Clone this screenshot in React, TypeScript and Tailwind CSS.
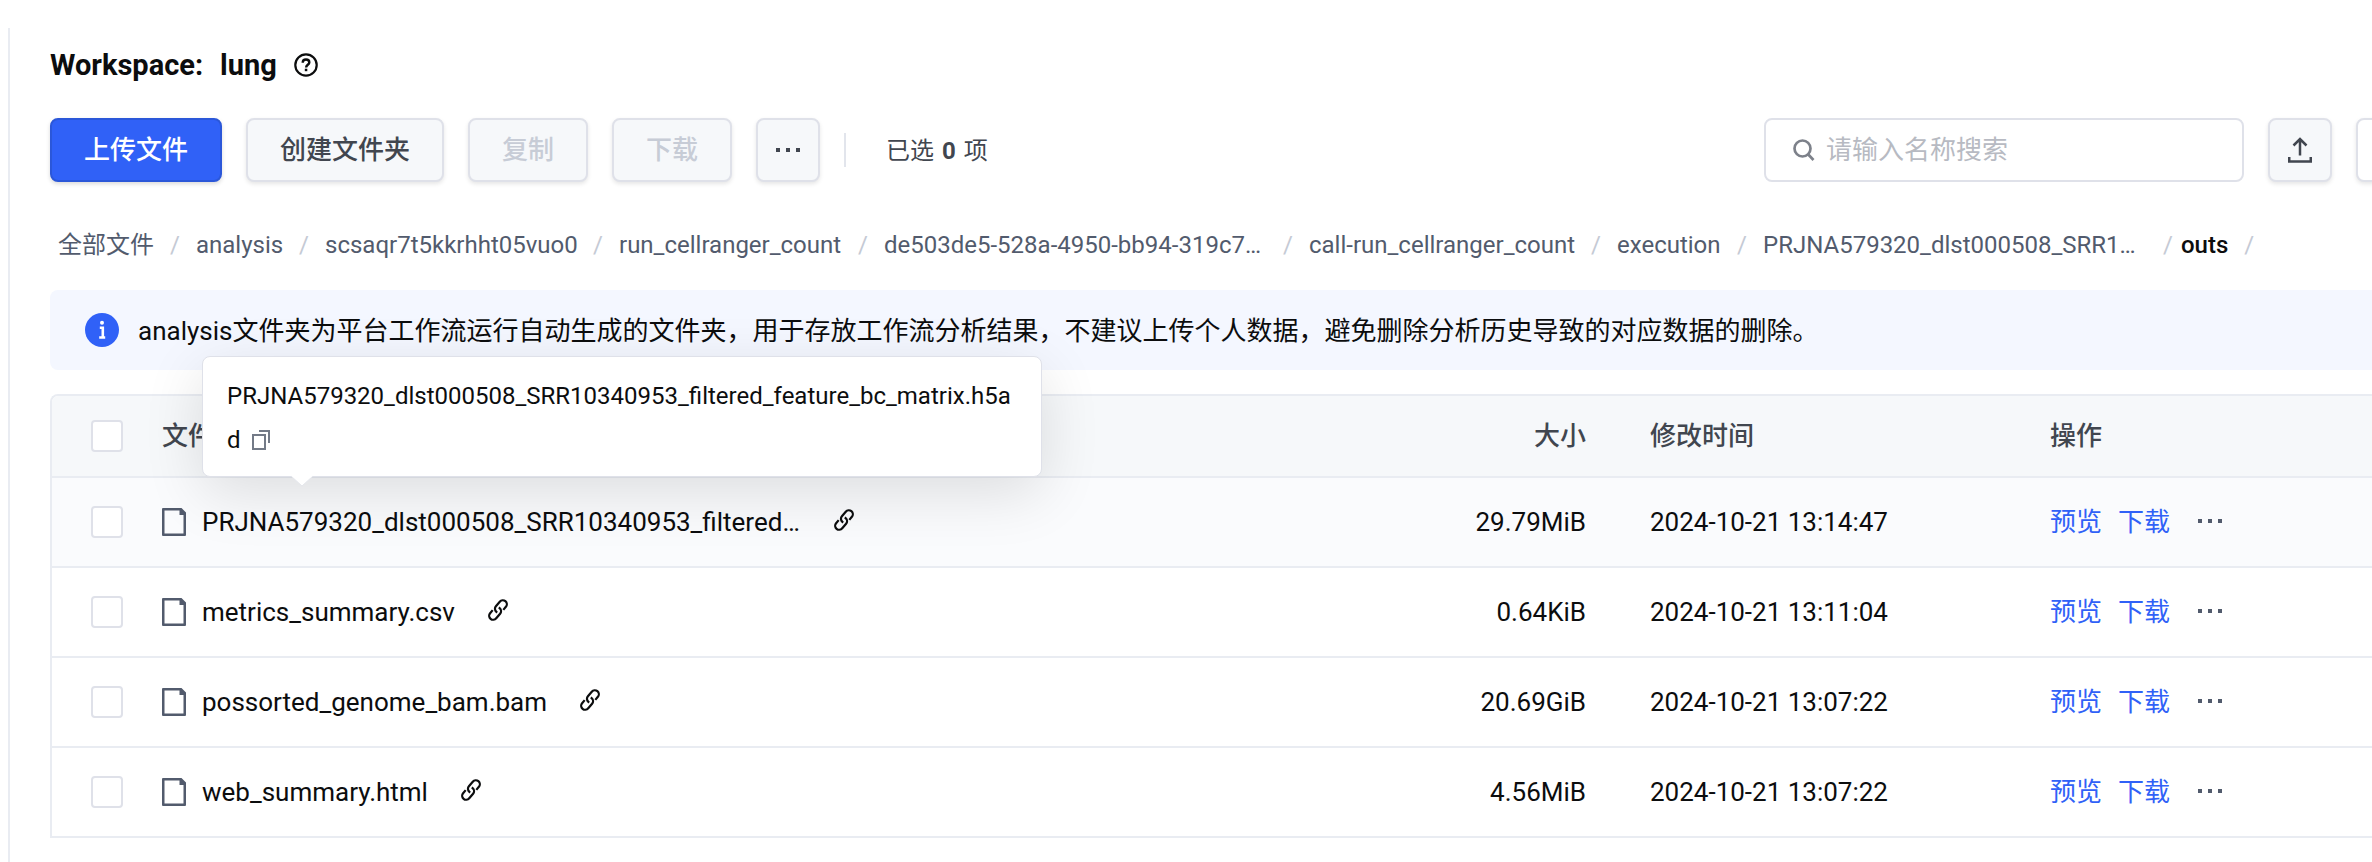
import type { ReactNode } from "react";

const crumbs = [
  { label: "全部文件", width: "w-[138px]", gap: "mr-4" },
  { label: "analysis", width: "w-[129px]", gap: "mr-4" },
  { label: "scsaqr7t5kkrhht05vuo0", width: "w-[294px]", gap: "mr-4" },
  { label: "run_cellranger_count", width: "w-[265px]", gap: "mr-4" },
  { label: "de503de5-528a-4950-bb94-319c7…", width: "w-[425px]", gap: "mr-4" },
  { label: "call-run_cellranger_count", width: "w-[308px]", gap: "mr-4" },
  { label: "execution", width: "w-[146px]", gap: "mr-4" },
  { label: "PRJNA579320_dlst000508_SRR1…", width: "w-[418px]", gap: "mr-2" },
];

const files = [
  { name: "PRJNA579320_dlst000508_SRR10340953_filtered…", nameWidth: "w-[597px]", size: "29.79MiB", time: "2024-10-21 13:14:47", active: true },
  { name: "metrics_summary.csv", nameWidth: "w-[251px]", size: "0.64KiB", time: "2024-10-21 13:11:04" },
  { name: "possorted_genome_bam.bam", nameWidth: "w-[343px]", size: "20.69GiB", time: "2024-10-21 13:07:22" },
  { name: "web_summary.html", nameWidth: "w-[224px]", size: "4.56MiB", time: "2024-10-21 13:07:22" },
];

const buttonBase = "flex h-16 shrink-0 items-center justify-center rounded-lg border-2 border-[#dfe1e9] text-[26px] font-medium shadow-[0_2px_4px_rgba(0,0,0,0.1)]";

function Dots({ className }: { className: string }) {
  return (
    <svg className={className} width="24" height="4" viewBox="0 0 24 4" fill="currentColor">
      <path d="M0 0h4v4H0zM10 0h4v4h-4zM20 0h4v4h-4z" />
    </svg>
  );
}

function HelpIcon() {
  return (
    <svg className="ml-[17px] shrink-0" width="24" height="24" viewBox="0 0 24 24" fill="none" stroke="#0c0d0e" strokeWidth="2.2">
      <circle cx="12" cy="12" r="10.7" />
      <path d="M8.700 9.700c0-2 1.400-3.200 3.300-3.200s3.300 1.200 3.300 2.900c0 2.300-3.200 2.400-3.200 5" strokeWidth="2.400" />
      <path d="M10.800 15.700h2.500v2.500h-2.500z" fill="#0c0d0e" stroke="none" />
    </svg>
  );
}

function FileIcon() {
  return (
    <svg className="shrink-0" width="24" height="28" viewBox="0 0 24 28">
      <path d="M0 1a1 1 0 0 1 1-1h18.500L24 4.500V27a1 1 0 0 1-1 1H1a1 1 0 0 1-1-1zM2.500 2.500v23h19V7H17.500V2.500z" fill="#525b6d" />
    </svg>
  );
}

function LinkIcon() {
  return (
    <svg className="-mt-1 shrink-0" width="22" height="22" viewBox="0 0 22 22" fill="none" stroke="#0c0d0e" strokeWidth="2.200">
      <g transform="translate(11 11) rotate(-50)">
        <path d="M3.500 4H7.500A4 4 0 0 0 7.500-4H1.500A4 4 0 0 0-2.500 0V1" />
        <path d="M-3.500-4H-7.500A4 4 0 0 0-7.500 4H-1.500A4 4 0 0 0 2.500 0V-1" />
      </g>
    </svg>
  );
}

function Checkbox() {
  return <span className="block size-8 shrink-0 rounded-[4px] border-2 border-[#dfe1e9] bg-white" />;
}

function Slash({ className = "" }: { className?: string }) {
  return <span className={`text-[#c5cad5] ${className}`}>/</span>;
}

function Row({ children, className }: { children: ReactNode; className: string }) {
  return <div className={`flex items-center border-b-2 border-[#e9ecf2] pl-[39px] ${className}`}>{children}</div>;
}

export default function App() {
  return (
    <div className="h-[862px] w-[2372px] overflow-hidden bg-white pt-7 pl-2 font-[Roboto,'Noto_Sans_CJK_SC',sans-serif] text-[#0c0d0e]">
      <main className="h-full border-l-2 border-[#e9ecf2] pl-10">
        <h1 className="flex h-[74px] items-center text-[29px] font-bold whitespace-pre">
          <span className="w-[170px] pt-0.5">Workspace:</span>
          <span className="pt-0.5">lung</span>
          <HelpIcon />
        </h1>

        <div className="mt-4 flex w-[2400px] items-center">
          <button className="flex h-16 w-[172px] items-center justify-center rounded-lg border-2 border-[#2b57d9] bg-[#3061f7] text-[26px] font-medium text-white shadow-[0_2px_4px_rgba(0,0,0,0.15)]">上传文件</button>
          <button className={`${buttonBase} ml-6 w-[198px] bg-[#f6f8fa] text-[#41464f]`}>创建文件夹</button>
          <button className={`${buttonBase} ml-6 w-[120px] bg-[#f6f8fa] text-[#c7ccd6]`}>复制</button>
          <button className={`${buttonBase} ml-6 w-[120px] bg-[#f6f8fa] text-[#c7ccd6]`}>下载</button>
          <button className={`${buttonBase} ml-6 w-16 bg-[#f6f8fa] text-[#41464f]`}>
            <Dots className="" />
          </button>
          <span className="ml-6 h-[34px] w-0.5 bg-[#e2e5ec]" />
          <p className="ml-10 flex items-center gap-2 pt-0.5 text-2xl text-[#41464f]">
            <span>已选</span>
            <b>0</b>
            <span>项</span>
          </p>
          <div className="ml-auto flex">
            <label className="flex h-16 w-[480px] items-center rounded-lg border-2 border-[#dfe1e9] pl-[27px] text-[26px] text-[#b7bac2]">
              <svg className="mr-[11px]" width="22" height="22" viewBox="0 0 22 22" fill="none" stroke="#7d818a" strokeWidth="2.700">
                <circle cx="9.500" cy="9.500" r="8" />
                <path d="m14.800 15 5.700 6" />
              </svg>
              <span>请输入名称搜索</span>
            </label>
            <button className={`${buttonBase} ml-6 w-16 bg-[#f6f8fa] text-[#41464f]`}>
              <svg width="24" height="26" viewBox="0 0 24 26" fill="none" stroke="currentColor" strokeWidth="2.500">
                <path d="M12 18.500V2.500M5.500 8.500 12 2l6.500 6.500M1.250 20v4.500h21.500V20" />
              </svg>
            </button>
            <button className={`${buttonBase} mr-[14px] ml-6 w-[80px] bg-white`} />
          </div>
        </div>

        <nav className="mt-[43px] flex h-10 items-center pl-2 text-2xl whitespace-pre text-[#525b6d]">
          {crumbs.map((crumb) => (
            <div key={crumb.label} className={`flex shrink-0 justify-between ${crumb.width}`}>
              <span>{crumb.label}</span>
              <Slash className={crumb.gap} />
            </div>
          ))}
          <span className="font-medium text-[#0c0d0e]">outs</span>
          <Slash className="ml-4" />
        </nav>

        <div className="mt-[25px] flex h-20 w-[2400px] items-center rounded-lg bg-[#f4f7ff] pl-[35px] text-[26px]">
          <svg className="mr-[19px]" width="34" height="34" viewBox="0 0 34 34">
            <circle cx="17" cy="17" r="17" fill="#3061f7" />
            <circle cx="17" cy="9.800" r="2" fill="#fff" />
            <path d="M14.800 14.700h3v9.800M14.200 24.500h6" fill="none" stroke="#fff" strokeWidth="2.600" />
          </svg>
          <p className="pt-0.5">analysis文件夹为平台工作流运行自动生成的文件夹，用于存放工作流分析结果，不建议上传个人数据，避免删除分析历史导致的对应数据的删除。</p>
        </div>

        <section className="relative mt-6 w-[2400px] rounded-tl-lg border-t-2 border-l-2 border-[#e9ecf2] text-[26px]">
          <Row className="h-[82px] rounded-tl-md bg-[#f6f8fa] font-medium text-[#41464f]">
            <Checkbox />
            <span className="ml-[39px] w-[1024px]">文件名</span>
            <span className="w-[400px] text-right">大小</span>
            <span className="ml-16 w-[400px]">修改时间</span>
            <span>操作</span>
          </Row>
          {files.map((file) => (
            <Row key={file.name} className={`h-[90px] ${file.active ? "bg-[#fafbfd]" : "bg-white"}`}>
              <Checkbox />
              <div className="ml-[39px] flex w-[1024px] items-center whitespace-nowrap">
                <FileIcon />
                <span className={`mr-[34px] ml-4 ${file.nameWidth}`}>{file.name}</span>
                <LinkIcon />
              </div>
              <span className="w-[400px] text-right">{file.size}</span>
              <span className="ml-16 w-[400px]">{file.time}</span>
              <span className="text-[#3061f7]">预览</span>
              <span className="ml-4 text-[#3061f7]">下载</span>
              <Dots className="ml-7 -mt-0.5 text-[#525b6d]" />
            </Row>
          ))}

          <div className="absolute -top-10 left-[150px] h-[121px] w-[840px] rounded-lg border border-[#dfe1e9] bg-white px-6 pt-[17px] text-2xl leading-[44px] shadow-[0_16px_60px_rgba(0,0,0,0.12)]">
            <div>PRJNA579320_dlst000508_SRR10340953_filtered_feature_bc_matrix.h5a</div>
            <div className="flex items-center">
              d
              <svg className="ml-[11px]" width="18" height="20" viewBox="0 0 18 20" fill="none" stroke="#737a87" strokeWidth="2">
                <rect x="1" y="5" width="12" height="14" />
                <path d="M7 1h10v12" />
              </svg>
            </div>
            <svg className="absolute top-[118px] left-[88px]" width="22" height="12" viewBox="0 0 22 12">
              <path d="M0 0h22v1L11 11 0 1z" fill="#fff" />
              <path d="M0 1 11 11 22 1" fill="none" stroke="#e4e6ec" />
            </svg>
          </div>
        </section>
      </main>
    </div>
  );
}
